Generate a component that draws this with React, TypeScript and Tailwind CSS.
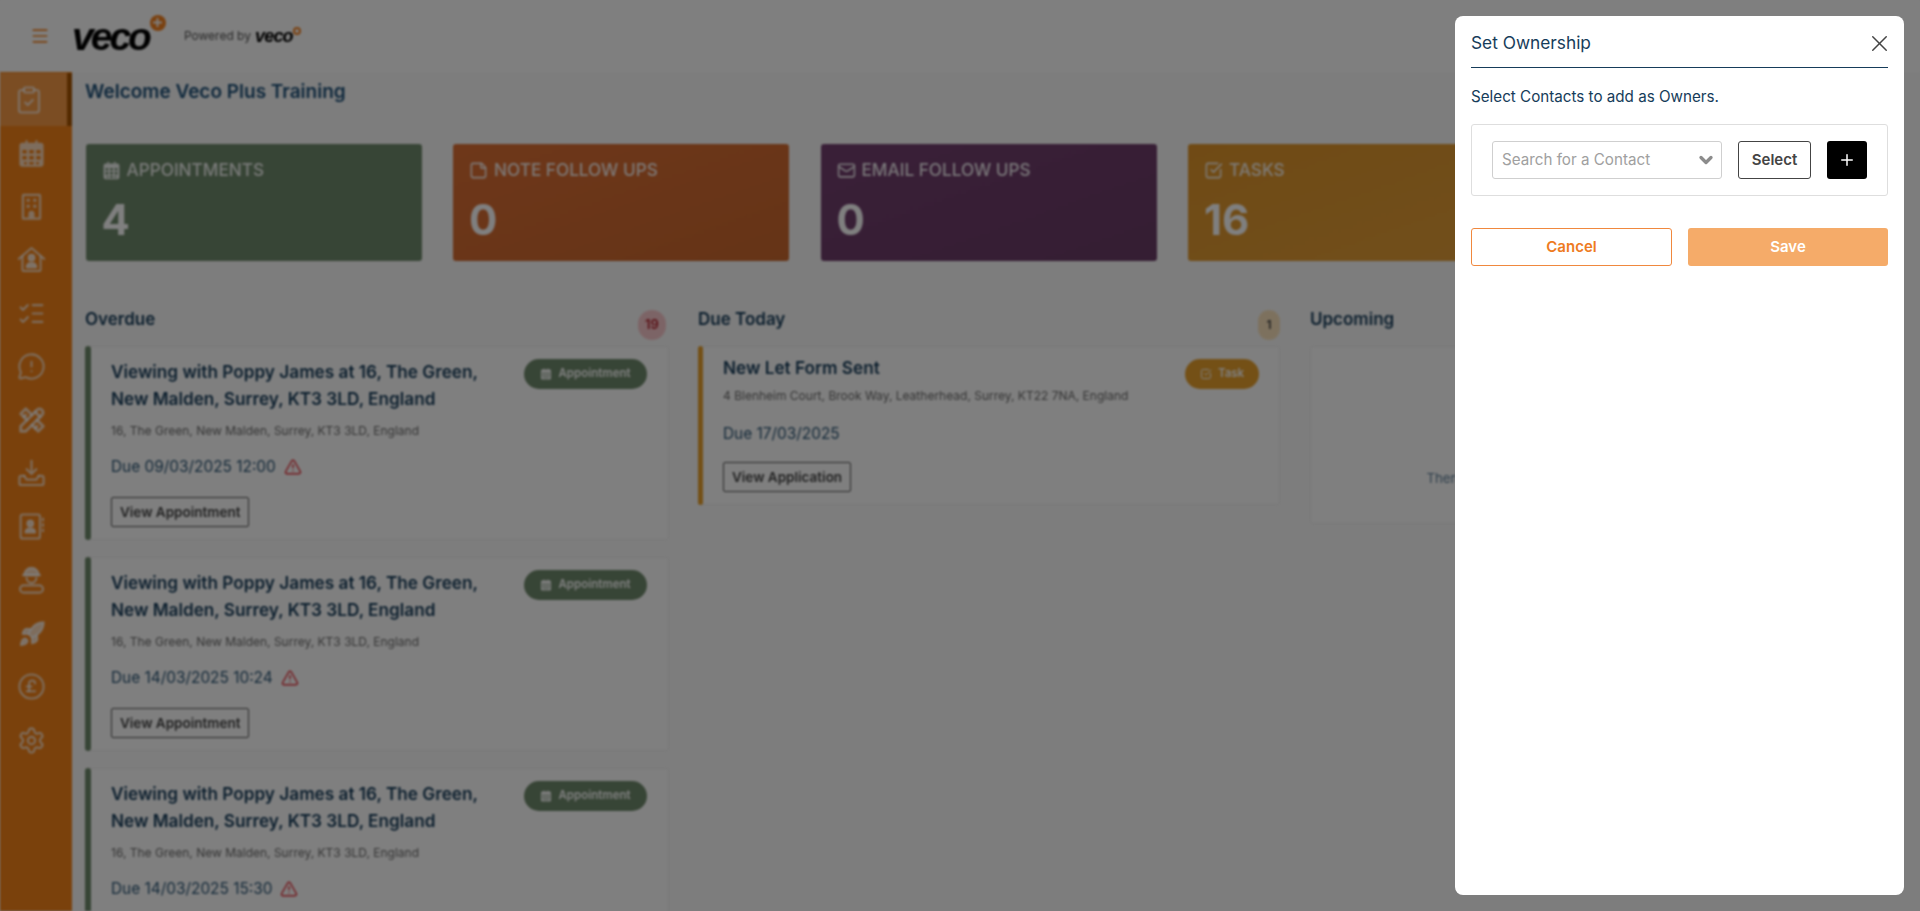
import {
  CheckSquare,
  CirclePoundSterling,
  ClipboardCheck,
  ListChecks,
  Mail,
  MessageCircleWarning,
  Rocket,
  Settings,
  StickyNote,
  TriangleAlert,
  X,
  Plus,
  Menu,
  ChevronDown,
} from "lucide-react";
import { TbTools } from "react-icons/tb";

const font = "font-['Inter','Noto_Sans',sans-serif]";

const Calendar = ({ size = 27 }: { size?: number }) => (
  <svg viewBox="0 0 24 24" width={size} height={size} fill="currentColor">
    <path
      fillRule="evenodd"
      d="M7 1h1.800v2h6.400V1H17v2h2.500A2.500 2.500 0 0 1 22 5.500v15a2.500 2.500 0 0 1-2.500 2.500h-15A2.500 2.500 0 0 1 2 20.500v-15A2.500 2.500 0 0 1 4.500 3H7zM4.500 9v3h3.500V9zm5.700 0v3h3.600V9zm5.800 0v3h3.500V9zM4.500 14v3h3.500v-3zm5.700 0v3h3.600v-3zm5.800 0v3h3.500v-3zM6 19v2h2v-2zm4.200 0v2h3.600v-2zm5.800 0v2h2v-2z"
    />
  </svg>
);

const BuildingIcon = () => (
  <svg viewBox="0 0 24 24" className="w-[29px] h-[29px]" fill="currentColor">
    <path
      fillRule="evenodd"
      d="M5.500 1.500h13A1.500 1.500 0 0 1 20 3v19a.9.9 0 0 1-.9.9H4.900A.9.9 0 0 1 4 22V3a1.500 1.500 0 0 1 1.500-1.500zm.3 1.800v17.900h3.700v-3.200a2.500 2.500 0 0 1 5 0v3.200h3.700V3.300zM8 5.500h2.500V8H8zm5.500 0H16V8h-2.500zM8 10.500h2.500V13H8zm5.500 0H16V13h-2.500z"
    />
  </svg>
);

const HouseUser = () => (
  <svg viewBox="0 0 24 24" className="w-[29px] h-[29px]" fill="none" stroke="currentColor" strokeWidth="1.700" strokeLinecap="round" strokeLinejoin="round">
    <path d="M1.500 11.500 12 2.500l10.500 9" />
    <path d="M4.500 9.500V20a1.500 1.500 0 0 0 1.500 1.500h12a1.500 1.500 0 0 0 1.500-1.500V9.500" />
    <circle cx="12" cy="10.500" r="2.400" fill="currentColor" />
    <path d="M8 18.500c0-2.300 1.800-3.500 4-3.500s4 1.200 4 3.500z" fill="currentColor" />
  </svg>
);

const ContactBook = () => (
  <svg viewBox="0 0 24 24" className="w-[29px] h-[29px]" fill="none" stroke="currentColor" strokeWidth="1.700" strokeLinecap="round" strokeLinejoin="round">
    <rect x="3" y="2" width="16" height="20" rx="1.800" />
    <circle cx="11" cy="9.500" r="2.400" fill="currentColor" />
    <path d="M7 17c0-2.300 1.800-3.400 4-3.400s4 1.100 4 3.400z" fill="currentColor" />
    <path d="M21.500 5.500v1.500M21.500 10v1.500M21.500 14.500V16" />
  </svg>
);

const TrayDownload = () => (
  <svg viewBox="0 0 24 24" className="w-[29px] h-[29px]" fill="none" stroke="currentColor" strokeWidth="1.800" strokeLinecap="round" strokeLinejoin="round">
    <path d="M12 1.500v10.500M8 8.500l4 4 4-4" />
    <path d="M6 14H3.500A1.500 1.500 0 0 0 2 15.500V20a1.500 1.500 0 0 0 1.500 1.500h17A1.500 1.500 0 0 0 22 20v-4.500A1.500 1.500 0 0 0 20.500 14H18" />
    <path d="M6 14l2 3h8l2-3" />
  </svg>
);

const Worker = () => (
  <svg viewBox="0 0 24 24" className="w-[29px] h-[29px]" fill="none" stroke="currentColor" strokeWidth="1.800" strokeLinecap="round" strokeLinejoin="round">
    <path d="M6 7.500a6 6 0 0 1 12 0z" fill="currentColor" />
    <path d="M5 7.500h14M8 10a4 4 0 0 0 8 0" />
    <rect x="2.500" y="16" width="19" height="6" rx="3" />
  </svg>
);

const navIcons = [
  <ClipboardCheck key="a" size={30} strokeWidth={1.700} />,
  <Calendar key="b" size={29} />,
  <BuildingIcon key="c" />,
  <HouseUser key="d" />,
  <ListChecks key="e" size={29} strokeWidth={1.800} />,
  <MessageCircleWarning key="f" size={29} strokeWidth={1.700} />,
  <TbTools key="g" size={30} strokeWidth={2.400} />,
  <TrayDownload key="h" />,
  <ContactBook key="i" />,
  <Worker key="j" />,
  <Rocket key="k" size={28} strokeWidth={1.800} fill="currentColor" />,
  <CirclePoundSterling key="l" size={29} strokeWidth={1.700} />,
  <Settings key="m" size={29} strokeWidth={1.800} />,
];

const Logo = ({ small }: { small?: boolean }) => (
  <span className="relative inline-block font-['Liberation_Sans',sans-serif] italic font-bold text-black leading-none">
    <span className={small ? "text-[18px] tracking-[-0.8px]" : "text-[39px] tracking-[-3px]"}>veco</span>
    <span
      className={
        small
          ? "absolute -right-[8px] top-0 w-[8px] h-[8px] rounded-full border-2 border-[#f58220]"
          : "absolute -right-[17px] -top-[2px] w-[16px] h-[16px] rounded-full bg-[#f58220] flex items-center justify-center"
      }
    >
      {!small && <Plus size={13} strokeWidth={3.500} className="text-white" />}
    </span>
  </span>
);

const stats = [
  { label: "Appointments", value: "4", bg: "bg-[#6f8a6c]", icon: <Calendar size={19} /> },
  { label: "Note Follow Ups", value: "0", bg: "bg-gradient-to-br from-[#dd6f34] to-[#cb682e]", icon: <StickyNote size={19} /> },
  { label: "Email Follow Ups", value: "0", bg: "bg-gradient-to-br from-[#743f70] to-[#6a3c66]", icon: <Mail size={19} /> },
  { label: "Tasks", value: "16", bg: "bg-gradient-to-br from-[#e0952a] to-[#e39f38]", icon: <CheckSquare size={19} /> },
];

const overdue = [
  { due: "Due 09/03/2025 12:00" },
  { due: "Due 14/03/2025 10:24" },
  { due: "Due 14/03/2025 15:30" },
];

const Appointment = ({ due }: { due: string }) => (
  <div className="flex rounded-[3px] bg-white border border-[#ededed] h-[194px] shrink-0">
    <div className="w-[6px] -ml-px -my-px rounded-[3px] bg-[#6f8a6c] shrink-0" />
    <div className="flex-1 pl-[20px] pr-[21px] pt-[11px]">
      <div className="flex justify-between items-start">
        <h3 className="text-[17.200px] leading-[27px] font-semibold text-[#163c5a] w-[385px]">
          Viewing with Poppy James at 16, The Green, New Malden, Surrey, KT3 3LD, England
        </h3>
        <span className="mt-[1px] h-[30px] w-[123px] rounded-full bg-[#6f8a6c] text-white text-[11.500px] font-semibold flex items-center justify-center gap-[6px]">
          <Calendar size={12} />
          Appointment
        </span>
      </div>
      <p className="mt-[10px] text-[12px] leading-[18px] text-[#6b6b6b]">16, The Green, New Malden, Surrey, KT3 3LD, England</p>
      <p className="mt-[15px] text-[15.400px] leading-[24px] text-[#2a5575] flex items-center gap-[8px]">
        {due}
        <TriangleAlert size={18} className="text-[#e6323c]" />
      </p>
      <button className="mt-[18px] h-[30px] px-[8px] rounded-[2px] border border-[#555] text-[13.500px] font-semibold text-[#444]">
        View Appointment
      </button>
    </div>
  </div>
);

export default function App() {
  return (
    <div className={`relative h-screen overflow-hidden bg-[#fbfbfb] ${font}`}>
      {/* page behind the dialog */}
      <div className="h-full flex flex-col blur-[1.200px]">
        <header className="h-[72px] shrink-0 bg-white flex items-center">
          <div className="w-[72px] flex justify-center pl-[8px]">
            <Menu size={20} className="text-[#f58220]" />
          </div>
          <Logo />
          <span className="ml-[35px] text-[12px] text-[#555] mr-[4px]">Powered by</span>
          <Logo small />
        </header>
        <div className="flex flex-1 min-h-0">
          <nav className="w-[72px] shrink-0 bg-[#f58318] flex flex-col pt-px">
            {navIcons.map((icon, i) => (
              <div
                key={i}
                className={`h-[53.400px] shrink-0 flex items-center justify-center pr-[9px] text-white/70 ${
                  i === 0 ? "bg-white/20 border-r-[5px] border-[#a85400] pr-[4px]" : ""
                }`}
              >
                {icon}
              </div>
            ))}
          </nav>
          <main className="flex-1 min-w-0 pl-[13px] overflow-hidden">
            <h1 className="text-[19px] leading-[30px] font-semibold text-[#1c4f78] mt-[5px]">Welcome Veco Plus Training</h1>
            <div className="mt-[37px] ml-[0.500px] flex gap-[31.500px]">
              {stats.map((s) => (
                <div key={s.label} className={`${s.bg} w-[336px] h-[117px] rounded-[3px] px-[16px] pt-[14px] text-white shrink-0`}>
                  <div className="flex items-center gap-[6px] text-[17.200px] leading-[24px] uppercase font-medium opacity-90">
                    {s.icon}
                    {s.label}
                  </div>
                  <div className="mt-[14px] text-[42px] leading-[48px] font-bold">{s.value}</div>
                </div>
              ))}
            </div>
            <div className="mt-[50px] flex gap-[29px]">
              <section className="w-[584px] shrink-0 flex flex-col">
                <div className="flex justify-between items-start h-[35px]">
                  <h2 className="text-[17px] leading-[17px] font-semibold text-[#163c5a]">Overdue</h2>
                  <span className="w-[28px] h-[30px] -mt-[1px] mr-[3px] rounded-full bg-[#f9c8cc] text-[#b3202c] text-[13px] font-semibold flex items-center justify-center">19</span>
                </div>
                <div className="flex flex-col gap-[17px]">
                  {overdue.map((o) => (
                    <Appointment key={o.due} due={o.due} />
                  ))}
                </div>
              </section>
              <section className="w-[582px] shrink-0 flex flex-col">
                <div className="flex justify-between items-start h-[35px]">
                  <h2 className="text-[17px] leading-[17px] font-semibold text-[#163c5a]">Due Today</h2>
                  <span className="w-[22px] h-[30px] -mt-[1px] rounded-full bg-[#fbe3bd] text-[#444] text-[12px] font-semibold flex items-center justify-center">1</span>
                </div>
                <div className="flex rounded-[3px] bg-white border border-[#ededed] h-[159px]">
                  <div className="w-[5px] -ml-px -my-px rounded-[3px] bg-[#e8a02c] shrink-0" />
                  <div className="flex-1 pl-[20px] pr-[20px] pt-[7px]">
                    <div className="flex justify-between items-start">
                      <h3 className="text-[17.200px] leading-[27px] font-semibold text-[#163c5a]">New Let Form Sent</h3>
                      <span className="mt-[5px] h-[30px] w-[74px] rounded-full bg-[#e8a02c] text-white text-[11.500px] font-semibold flex items-center justify-center gap-[6px]">
                        <CheckSquare size={12} />
                        Task
                      </span>
                    </div>
                    <p className="-mt-[2px] text-[12px] leading-[18px] text-[#6b6b6b]">4 Blenheim Court, Brook Way, Leatherhead, Surrey, KT22 7NA, England</p>
                    <p className="mt-[17px] text-[15.400px] leading-[24px] text-[#2a5575]">Due 17/03/2025</p>
                    <button className="mt-[16px] h-[30px] px-[8px] rounded-[2px] border border-[#555] text-[13.500px] font-semibold text-[#444]">
                      View Application
                    </button>
                  </div>
                </div>
              </section>
              <section className="w-[582px] shrink-0 ml-px flex flex-col">
                <div className="h-[35px]">
                  <h2 className="text-[17px] leading-[17px] font-semibold text-[#163c5a]">Upcoming</h2>
                </div>
                <div className="h-[178px] rounded-[3px] bg-white border border-[#ededed] flex items-end justify-center pb-[34px] text-[13.300px] text-[#5d7d96]">
                  There are currently no upcoming tasks or appointments
                </div>
              </section>
            </div>
          </main>
        </div>
      </div>

      {/* dialog overlay */}
      <div className="absolute inset-0 bg-black/50" />
      <div className="absolute left-[1455px] top-[16px] w-[449px] h-[879px] rounded-[8px] bg-white px-[16px] text-[#163c5a]">
        <div className="h-[52px] border-b border-[#163c5a] flex items-center justify-between">
          <h2 className="text-[17.300px] pt-[3px]">Set Ownership</h2>
          <X size={27} strokeWidth={1.300} className="text-[#444] mt-[4px] -mr-[5px]" />
        </div>
        <p className="mt-[17px] text-[15.200px] leading-[24px]">Select Contacts to add as Owners.</p>
        <div className="mt-[15px] h-[72px] rounded-[3px] border border-[#dedede] flex items-center pl-[20px] pr-[20px]">
          <div className="w-[230px] h-[38px] rounded-[3px] border border-[#cfcfcf] flex items-center justify-between pl-[9px] pr-[5px] text-[15.200px] text-[#a0a0a0]">
            Search for a Contact
            <ChevronDown size={20} strokeWidth={4} className="text-[#8c8c8c]" />
          </div>
          <button className="ml-[16px] w-[73px] h-[38px] rounded-[3px] border border-[#444] text-[15px] font-semibold text-[#444]">Select</button>
          <button className="ml-[16px] w-[40px] h-[38px] rounded-[3px] bg-black text-white flex items-center justify-center">
            <Plus size={18} strokeWidth={2} />
          </button>
        </div>
        <div className="mt-[32px] flex gap-[16px]">
          <button className="w-[201px] h-[38px] rounded-[3px] border border-[#f0883e] text-[#ee7b1f] text-[15px] font-semibold">Cancel</button>
          <button className="flex-1 h-[38px] rounded-[3px] bg-[#f5ab69] text-white text-[15px] font-semibold">Save</button>
        </div>
      </div>
    </div>
  );
}
